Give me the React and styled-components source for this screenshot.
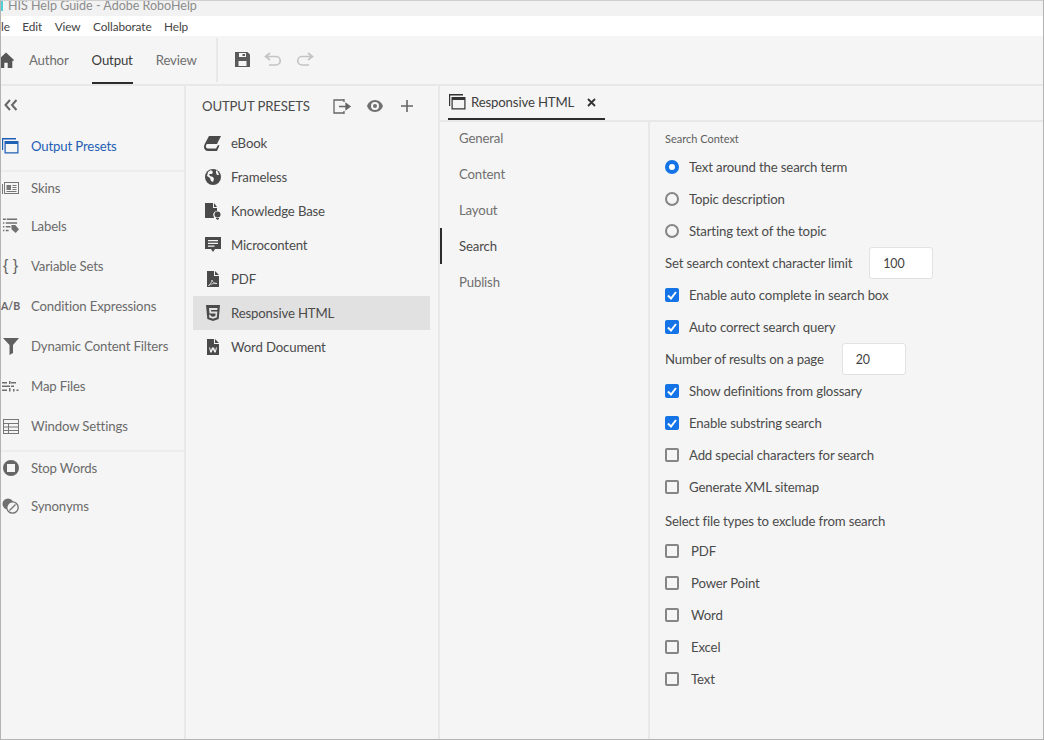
import React from 'react';
import styled, { createGlobalStyle } from 'styled-components';

const Global = createGlobalStyle`
  html, body { margin: 0; padding: 0; background: #f5f5f5; }
  * { box-sizing: border-box; }
  body { font-family: "Lato", "Noto Sans", sans-serif; -webkit-font-smoothing: antialiased; }
`;

const Window = styled.div`
  width: 1044px; height: 740px; overflow: hidden;
  display: flex; flex-direction: column;
  background: #f5f5f5; color: #4b4b4b;
  border-left: 1px solid #b4b4b4; border-right: 1px solid #b4b4b4; border-bottom: 1px solid #b4b4b4;
  font-size: 13.2px; letter-spacing: -0.15px;
`;
const TitleBar = styled.div`
  height: 16px; flex: none; display: flex; align-items: flex-start; gap: 5px; overflow: hidden;
  color: #8c8c8c; font-size: 12.5px; letter-spacing: 0; line-height: 10px; background: #f2f2f2; border-top: 1px solid #cfcfcf;
`;
const AppMark = styled.span`width: 2px; height: 10px; background: #4fd0d6; flex: none;`;
const MenuBar = styled.div`
  height: 20px; flex: none; background: #fff; display: flex; align-items: center; gap: 12.5px;
  font-size: 11.8px; letter-spacing: -0.1px; color: #444; overflow: hidden;
`;
const Toolbar = styled.div`
  height: 50px; flex: none; display: flex; align-items: stretch; border-bottom: 2px solid #e8e8e8;
`;
const HomeSlot = styled.div`width: 28px; display: flex; align-items: center; overflow: hidden; color: #4d4d4d; padding-bottom: 1px;`;
const HomeIcon = styled.svg`margin-left: -3px; flex: none;`;
const TopTabs = styled.div`display: flex; gap: 23px; padding-right: 19px;`;
const TopTab = styled.div`
  display: flex; align-items: center; height: 48px; position: relative; font-size: 13.2px; padding-bottom: 1px;
  color: ${p => (p.$active ? '#3a3a3a' : '#6e6e6e')};
  ${p => p.$active && `&::after{content:"";position:absolute;left:0;right:0;bottom:0;height:2px;background:#2c2c2c;}`}
`;
const ToolSep = styled.div`width: 2px; height: 44px; align-self: center; background: #e8e8e8;`;
const ToolIcons = styled.div`display: flex; align-items: center; gap: 14px; padding-left: 17px; padding-bottom: 2px;`;

const Body = styled.div`flex: 1; display: flex; min-height: 0;`;
const Rail = styled.aside`width: 185px; flex: none; border-right: 2px solid #e8e8e8; display: flex; flex-direction: column;`;
const Collapse = styled.div`height: 38px; display: flex; align-items: center; padding-left: 3px; color: #666;`;
const RailGroup = styled.div`
  display: flex; flex-direction: column;
  ${p => p.$divider && 'border-bottom: 2px solid #ececec;'}
  padding-bottom: ${p => p.$pb || 0}px;
  margin-bottom: ${p => p.$mb || 0}px;
`;
const RailItem = styled.div`
  height: ${p => p.$h}px; display: flex; align-items: center; gap: 12px; padding-left: 1px; flex: none;
  color: ${p => (p.$active ? '#1f5fb4' : '#6b6b6b')}; white-space: nowrap;
`;
const IconBox = styled.span`width: 17px; height: 18px; flex: none; display: flex; align-items: center; justify-content: center;`;
const Mono = styled.span`font-size: 10.5px; font-weight: 700; color: #666; letter-spacing: 0;`;
const Braces = styled.span`font-size: 16px; color: #666; font-family: "Liberation Sans", sans-serif; letter-spacing: 0; white-space: nowrap;`;

const Presets = styled.section`width: 254px; flex: none; border-right: 2px solid #e8e8e8; display: flex; flex-direction: column;`;
const PresetsHead = styled.div`
  height: 40px; display: flex; align-items: center; padding-left: 16px; color: #4b4b4b; flex: none;
`;
const PresetsTitle = styled.span`width: 131px; white-space: nowrap;`;
const HeadIcons = styled.div`display: flex; align-items: center; gap: 15px; color: #666;`;
const PlusIcon = styled.svg`margin-left: 3px;`;
const PresetList = styled.div`display: flex; flex-direction: column; padding: 0 8px 0 7px;`;
const Preset = styled.div`
  height: 34px; display: flex; align-items: center; gap: 10px; padding-left: 11px;
  background: ${p => (p.$active ? '#e1e1e1' : 'transparent')}; color: #4b4b4b; white-space: nowrap;
`;

const Main = styled.section`flex: 1; display: flex; flex-direction: column; min-width: 0;`;
const TabBar = styled.div`height: 36px; flex: none; border-bottom: 2px solid #e8e8e8; padding-left: 8px; display: flex;`;
const DocTab = styled.div`
  width: 157px; height: 34px; display: flex; align-items: center; gap: 5px; padding-left: 1px;
  border-bottom: 2px solid #2c2c2c; color: #3f3f3f; white-space: nowrap;
`;
const CloseX = styled.span`display: flex; margin-left: 8px; color: #333;`;
const Split = styled.div`flex: 1; display: flex; min-height: 0;`;
const SubNav = styled.nav`width: 210px; flex: none; border-right: 2px solid #e8e8e8; display: flex; flex-direction: column;`;
const SubList = styled.div`display: flex; flex-direction: column; margin-top: -2px;`;
const SubItem = styled.div`
  height: 36px; display: flex; align-items: center; padding-left: 17px; flex: none;
  color: ${p => (p.$active ? '#4b4b4b' : '#6f6f6f')};
  border-left: 2px solid ${p => (p.$active ? '#2c2c2c' : 'transparent')};
`;
const Form = styled.div`flex: 1; padding: 4px 0 0 15px; display: flex; flex-direction: column;`;
const Row = styled.div`
  height: ${p => p.$h || 32}px; padding-top: ${p => p.$pt || 0}px; flex: none; display: flex; align-items: center; white-space: nowrap; color: #4b4b4b;
`;
const SmallLabel = styled(Row)`font-size: 11px; letter-spacing: 0; color: #5f5f5f;`;
const Radio = styled.span`
  width: 14px; height: 14px; border-radius: 50%; flex: none; margin-right: 10px;
  ${p => (p.$on ? 'background:#fff;border:4.5px solid #1473e6;' : 'border:2px solid #858585;')}
`;
const Box = styled.span`
  width: 14px; height: 14px; border-radius: 2px; flex: none; margin-right: ${p => p.$mr || 10}px;
  display: flex; align-items: center; justify-content: center;
  ${p => (p.$on ? 'background:#1473e6;' : 'border:2px solid #858585;')}
`;
const NumInput = styled.div`
  width: 64px; height: 32px; background: #fff; border: 1px solid #e2e2e2; border-radius: 3px;
  margin-left: ${p => p.$ml}px; display: flex; align-items: center; padding-left: 13px; font-size: 12.4px; color: #3f3f3f;
`;

const S = ({ w = 18, h = 18, vb = '0 0 18 18', children, ...r }) => (
  <svg width={w} height={h} viewBox={vb} fill="currentColor" {...r}>{children}</svg>
);
const WinIcon = ({ c = '#1f5fb4' }) => (
  <S w={17} h={16} vb="0 0 17 16">
    <path d="M0 0h14v1.500H0z M0 1.500h1.200V12H0z" fill={c} />
    <path d="M2.500 3h14v12.500h-14z M3.700 6v8.300h11.600V6z" fill={c} fillRule="evenodd" />
  </S>
);
const railIcon = {
  skins: <S w={17} h={12} vb="0 0 17 12"><path fillRule="evenodd" d="M2 0h15v12H2zM3 1v10h13V1z M0 2h1v10H0z" fill="#777" /><path d="M4.500 3h4.500v5H4.500z" fill="#777" /><path d="M10.500 3h4v1h-4zM10.500 5h4v1h-4zM10.500 7h4v1h-4zM4.500 9h10v1h-10z" fill="#777" /></S>,
  labels: <S w={18} h={17} vb="0 0 18 17"><path d="M1 0h3v1.500H1zM5 0h11v1.500H5zM1 4h1.500v1.500H1zM4 4h12v1.500H4zM1 8h1.500v1.500H1zM4 8h5v1.500H4zM1 12h1.500v1.500H1zM4 12h3v1.500H4z" fill="#707070" /><path d="M10 7h4l4 4.500-3.500 4-4.500-4z" fill="#707070" /></S>,
  filter: <S w={16} h={17} vb="0 0 16 17"><path d="M0 0h16L10 7v8l-3.500 2V7z" fill="#606060" /></S>,
  map: <S w={17} h={11} vb="0 0 17 11"><path d="M0 1h5v1.500H0zM7 0h1.500v3H7zM9 1h5v1.500H9zM0 4.500h8v1.500H0zM9 4.500h3v1.500H9zM0 8.500h5V10H0zM7 7h1.500v3.500H7zM11 8h1.500v2.500H11zM14.500 8.500h2V10h-2z" fill="#6c6c6c" /></S>,
  win: <S w={16} h={15} vb="0 0 16 15"><path fillRule="evenodd" d="M0 0h16v15H0zM1 1v3h14V1zM1 5v2.500h4V5zM6 5v2.500h9V5zM1 8.500V11h4V8.500zM6 8.500V11h9V8.500zM1 12v2h4v-2zM6 12v2h9v-2z" fill="#777" /></S>,
  stop: <S w={16} h={16} vb="0 0 16 16"><path fillRule="evenodd" d="M8 0a8 8 0 1 1 0 16A8 8 0 0 1 8 0zM4 4v8h8V4z" fill="#666" /></S>,
  syn: <S w={17} h={16} vb="0 0 17 16"><circle cx="6" cy="6" r="5.500" fill="#707070" /><circle cx="10.500" cy="9.500" r="5.700" fill="#f5f5f5" stroke="#707070" strokeWidth="1.300" /><path d="M7.500 12.500l6-6" stroke="#707070" strokeWidth="1.300" /></S>,
};
const presetIcon = {
  ebook: <S w={17} h={15} vb="0 0 17 15"><path d="M5 0h12l-4 8H3.500C2 8 1.800 10 2 11c.2 1.300 1.500 1.500 2.500 1.500H12l2-3.500 1.500.6L13 15H4C1.500 15 0 13 0 11c0-1 .3-2.300 1-3.500z" fill="#4a4a4a" /></S>,
  globe: <S w={16} h={16} vb="0 0 16 16"><circle cx="8" cy="8" r="8" fill="#4a4a4a" /><path d="M6 1l2 2-1 2H4l1 2 3 1 1 2-1 3-2-1-1-3-3-2 1-4zM11 1l2 2 1 3-2 0-1-2z" fill="#f5f5f5" /></S>,
  kb: <S w={16} h={17} vb="0 0 16 17"><path d="M0 0h8v5h4v3a4 4 0 0 0-3 6.500V15H0z" fill="#4a4a4a" /><path d="M9 0l3 4H9z" fill="#4a4a4a" /><circle cx="12.500" cy="11.500" r="3" fill="#4a4a4a" /><path d="M11 15h3v1h-3zM11.800 16.200h1.500v.8h-1.500z" fill="#4a4a4a" /></S>,
  micro: <S w={16} h={16} vb="0 0 16 16"><path fillRule="evenodd" d="M0 0h16v12h-6l-2 3-2-3H0zM3 3v1.300h10V3zM3 5.800v1.300h10V5.800zM3 8.500v1.300h6.500V8.500z" fill="#4a4a4a" /></S>,
  pdf: <S w={12} h={16} vb="0 0 12 16"><path fillRule="evenodd" d="M0 0h7v5h5v11H0z" fill="#4a4a4a" /><path d="M8 0l4 4H8z" fill="#4a4a4a" /><path d="M1.500 14.500c2-1 3-3 3.500-5.500.5 2 1.500 3 5 3.500-3-.3-6 .3-8.500 2z" fill="none" stroke="#f5f5f5" strokeWidth=".7" /></S>,
  html: <S w={14} h={16} vb="0 0 14 16"><path fillRule="evenodd" d="M0 0h14l-1.300 14L7 16l-5.700-2zM3 3l.5 5.500h6l-.2 2.500-2.300.8-2.300-.8-.1-1.300H3l.2 2.800L7 13.800l3.800-1.300.6-6H5.200L5 5h6.300l.2-2z" fill="#4a4a4a" /></S>,
  word: <S w={12} h={16} vb="0 0 12 16"><path fillRule="evenodd" d="M0 0h7v5h5v11H0zM2 8.500l1.300 5h1.300l1.400-3.300 1.400 3.300h1.300l1.300-5H8.900l-.7 3.200L7 8.500H5l-1.200 3.200-.7-3.200z" fill="#4a4a4a" /><path d="M8 0l4 4H8z" fill="#4a4a4a" /></S>,
};

const rail1 = [
  ['Skins', railIcon.skins, 36],
  ['Labels', railIcon.labels, 40],
  ['Variable Sets', <Braces>{'{ }'}</Braces>, 40],
  ['Condition Expressions', <Mono>A/B</Mono>, 40],
  ['Dynamic Content Filters', railIcon.filter, 40],
  ['Map Files', railIcon.map, 40],
  ['Window Settings', railIcon.win, 40],
];
const presets = [
  ['eBook', presetIcon.ebook], ['Frameless', presetIcon.globe], ['Knowledge Base', presetIcon.kb],
  ['Microcontent', presetIcon.micro], ['PDF', presetIcon.pdf], ['Responsive HTML', presetIcon.html, true],
  ['Word Document', presetIcon.word],
];
const Check = () => (
  <svg width="10" height="9" viewBox="0 0 10 9"><path d="M1 4.500l3 3 5-6.500" fill="none" stroke="#fff" strokeWidth="2" /></svg>
);
const CheckRow = ({ on, children, mr }) => (
  <Row><Box $on={on} $mr={mr}>{on && <Check />}</Box>{children}</Row>
);

export default function App() {
  return (
    <Window>
      <Global />
      <TitleBar><AppMark />HIS Help Guide - Adobe RoboHelp</TitleBar>
      <MenuBar>
        <span>le</span><span>Edit</span><span>View</span><span>Collaborate</span><span>Help</span>
      </MenuBar>
      <Toolbar>
        <HomeSlot>
          <HomeIcon width="16" height="16" viewBox="0 0 14 14"><path d="M7 .5L14 7l-1 1-.500-.500V14H8.500V9.500h-3V14H1.500V7.500L1 8 0 7z" fill="#555" /></HomeIcon>
        </HomeSlot>
        <TopTabs>
          <TopTab>Author</TopTab><TopTab $active>Output</TopTab><TopTab>Review</TopTab>
        </TopTabs>
        <ToolSep />
        <ToolIcons>
          <svg width="15" height="15" viewBox="0 0 15 15"><path fillRule="evenodd" d="M0 0h12.500L15 2.500V15H0zM4 1v4h7V1zM7.500 2H10v2H7.500zM3.500 9v5h8V9z" fill="#5a5a5a" /></svg>
          <svg width="18" height="14" viewBox="0 0 18 14"><path d="M6 1L1.500 4.500 6 8M2 4.500h10a4.200 4.200 0 0 1 0 8.500H5" fill="none" stroke="#c4c4c4" strokeWidth="1.700" /></svg>
          <svg width="18" height="14" viewBox="0 0 18 14"><path d="M12 1l4.500 3.500L12 8M16 4.500H6a4.200 4.200 0 0 0 0 8.500h7" fill="none" stroke="#c4c4c4" strokeWidth="1.700" /></svg>
        </ToolIcons>
      </Toolbar>
      <Body>
        <Rail>
          <Collapse>
            <svg width="14" height="12" viewBox="0 0 14 12"><path d="M6 1L1.500 6 6 11M12.500 1L8 6l4.500 5" fill="none" stroke="#666" strokeWidth="2" /></svg>
          </Collapse>
          <RailGroup $divider $pb={2} $mb={-2}>
            <RailItem $active $h={44}><IconBox><WinIcon /></IconBox>Output Presets</RailItem>
          </RailGroup>
          <RailGroup $divider $pb={4}>
            {rail1.map(([t, i, h]) => <RailItem key={t} $h={h}><IconBox>{i}</IconBox>{t}</RailItem>)}
          </RailGroup>
          <RailItem $h={32}><IconBox>{railIcon.stop}</IconBox>Stop Words</RailItem>
          <RailItem $h={44}><IconBox>{railIcon.syn}</IconBox>Synonyms</RailItem>
        </Rail>
        <Presets>
          <PresetsHead>
            <PresetsTitle>OUTPUT PRESETS</PresetsTitle>
            <HeadIcons>
              <svg width="19" height="15" viewBox="0 0 19 15"><path d="M11 1H1v13h10M11 0v3M11 12v3" fill="none" stroke="#666" strokeWidth="1.300" /><path d="M6 7.500h9M13 4.500l4 3-4 3z" fill="#666" stroke="#666" strokeWidth="1.300" /></svg>
              <svg width="16" height="12" viewBox="0 0 16 12"><path fillRule="evenodd" d="M8 0c4 0 7 3 8 6-1 3-4 6-8 6s-7-3-8-6c1-3 4-6 8-6zm0 2a4 4 0 1 0 0 8 4 4 0 0 0 0-8zm0 2a2 2 0 1 1 0 4 2 2 0 0 1 0-4z" fill="#707070" /></svg>
              <PlusIcon width="12" height="12" viewBox="0 0 12 12"><path d="M5.200 0h1.600v5.200H12v1.600H6.800V12H5.200V6.800H0V5.200h5.200z" fill="#666" /></PlusIcon>
            </HeadIcons>
          </PresetsHead>
          <PresetList>
            {presets.map(([t, i, a]) => <Preset key={t} $active={a}><IconBox>{i}</IconBox>{t}</Preset>)}
          </PresetList>
        </Presets>
        <Main>
          <TabBar>
            <DocTab>
              <IconBox><WinIcon c="#333" /></IconBox>Responsive HTML
              <CloseX><svg width="9" height="9" viewBox="0 0 9 9"><path d="M1 1l7 7M8 1L1 8" stroke="#333" strokeWidth="1.800" /></svg></CloseX>
            </DocTab>
          </TabBar>
          <Split>
            <SubNav>
              <SubList>
                <SubItem>General</SubItem><SubItem>Content</SubItem><SubItem>Layout</SubItem>
                <SubItem $active>Search</SubItem><SubItem>Publish</SubItem>
              </SubList>
            </SubNav>
            <Form>
              <SmallLabel $h={25}>Search Context</SmallLabel>
              <Row><Radio $on />Text around the search term</Row>
              <Row><Radio />Topic description</Row>
              <Row><Radio />Starting text of the topic</Row>
              <Row>Set search context character limit<NumInput $ml={17}>100</NumInput></Row>
              <CheckRow on>Enable auto complete in search box</CheckRow>
              <CheckRow on>Auto correct search query</CheckRow>
              <Row>Number of results on a page<NumInput $ml={18}>20</NumInput></Row>
              <CheckRow on>Show definitions from glossary</CheckRow>
              <CheckRow on>Enable substring search</CheckRow>
              <CheckRow>Add special characters for search</CheckRow>
              <CheckRow>Generate XML sitemap</CheckRow>
              <Row $h={32} $pt={4}>Select file types to exclude from search</Row>
              {['PDF', 'Power Point', 'Word', 'Excel', 'Text'].map(t => (
                <CheckRow key={t} mr={12}>{t}</CheckRow>
              ))}
            </Form>
          </Split>
        </Main>
      </Body>
    </Window>
  );
}
